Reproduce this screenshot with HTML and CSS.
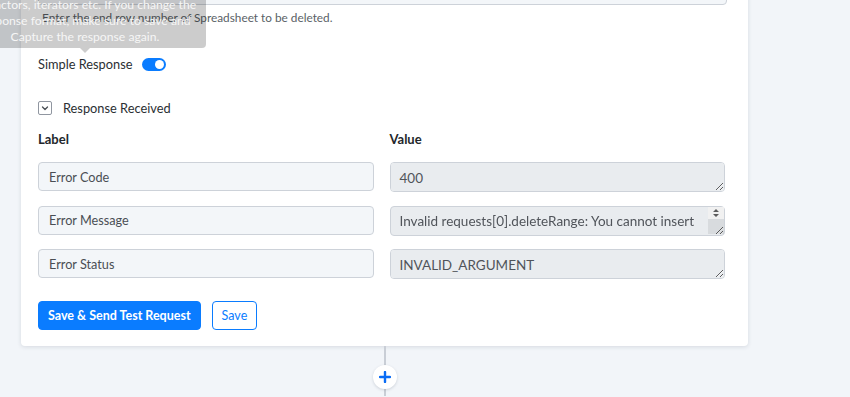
FILE: index.html
```html
<!DOCTYPE html>
<html lang="en">
<head>
    <meta charset="UTF-8">
    <meta name="viewport" content="width=device-width, initial-scale=1.0">
    <title>Delete Rows - Test Request</title>
    <link rel="stylesheet" href="styles.css">
</head>
<body>
    <div class="page">
        <div class="card">
            <div class="field">
                <input class="field-input" type="text" value="">
                <p class="help-text">Enter the end row number of Spreadsheet to be deleted.</p>
            </div>

            <div class="toggle-row">
                <span>Simple Response</span>
                <span class="switch"><span class="switch-knob"></span></span>
            </div>

            <div class="collapse-row">
                <span class="chevron-box">
                    <svg width="10" height="10" viewBox="0 0 10 10">
                        <path d="M2.5 4 L5 6.5 L7.5 4" fill="none" stroke="#4a4f55" stroke-width="1.3" stroke-linecap="round" stroke-linejoin="round"/>
                    </svg>
                </span>
                <span>Response Received</span>
            </div>

            <div class="response-grid">
                <div class="col-head">Label</div>
                <div class="col-head">Value</div>

                <input class="label-input" type="text" value="Error Code" readonly>
                <textarea class="value-input" readonly>400</textarea>

                <input class="label-input" type="text" value="Error Message" readonly>
                <div class="value-wrap">
                    <textarea class="value-input value-scroll" readonly>Invalid requests[0].deleteRange: You cannot insert within a table, at range of 0 and 1000. Please delete fewer rows or ranges.</textarea>
                    <span class="scroll-arrows">
                        <svg width="16" height="12" viewBox="0 0 16 12">
                            <path d="M5 5 L8 2 L11 5 Z M5 7 H11 L8 10 Z" fill="#5c5c5c"/>
                        </svg>
                    </span>
                    <span class="scroll-corner"></span>
                </div>

                <input class="label-input" type="text" value="Error Status" readonly>
                <textarea class="value-input" readonly>INVALID_ARGUMENT</textarea>
            </div>

            <div class="actions">
                <button class="btn btn-primary">Save &amp; Send Test Request</button>
                <button class="btn btn-outline">Save</button>
            </div>
        </div>

        <div class="connector">
            <span class="add-step">
                <svg width="12" height="12" viewBox="0 0 12 12">
                    <path d="M6 1 V11 M1 6 H11" stroke="#0a6cf5" stroke-width="2.4" stroke-linecap="round"/>
                </svg>
            </span>
        </div>

        <div class="tooltip">
            The response below is used to map data in<br>
            extractors, iterators etc. If you change the<br>
            response format, make sure to save and<br>
            Capture the response again.
        </div>
    </div>
</body>
</html>
```

FILE: styles.css
```css
body {
    margin: 0;
    height: 397px;
    overflow: hidden;
    background-color: #f2f5f9;
    color: #2b2f33;
    font-family: 'Lato', 'Open Sans', sans-serif;
    font-size: 13px;
}

.page {
    display: flow-root;
    position: relative;
    width: 727px;
    padding-left: 21px;
}

.card {
    margin-top: -29px;
    padding: 0 23px 16px 17px;
    background: #ffffff;
    border-radius: 0 0 4px 4px;
    box-shadow: 0 1px 4px rgba(40, 55, 80, 0.14);
}

.field-input {
    display: block;
    box-sizing: border-box;
    width: calc(100% + 2px);
    height: 34px;
    margin: 0;
    background: #f3f6f9;
    border: 1px solid #cdd2d9;
    border-radius: 4px;
}

.help-text {
    margin: 6px 0 0 4px;
    font-size: 11.8px;
    line-height: 14px;
    color: #5a5f66;
}

.toggle-row {
    display: flex;
    align-items: center;
    gap: 10px;
    height: 20px;
    margin-top: 29px;
    font-size: 12.8px;
}

.switch {
    display: flex;
    align-items: center;
    justify-content: flex-end;
    box-sizing: border-box;
    width: 24px;
    height: 13px;
    padding: 2px;
    background: #0a7cff;
    border-radius: 7px;
}

.switch-knob {
    width: 9px;
    height: 9px;
    background: #ffffff;
    border-radius: 50%;
}

.collapse-row {
    display: flex;
    align-items: center;
    gap: 11px;
    height: 20px;
    margin-top: 24px;
    font-size: 12.8px;
}

.chevron-box {
    display: flex;
    align-items: center;
    justify-content: center;
    box-sizing: border-box;
    width: 14px;
    height: 14px;
    border: 1px solid #9096a0;
    border-radius: 2px;
}

.response-grid {
    display: grid;
    grid-template-columns: 1fr 1fr;
    column-gap: 16px;
    row-gap: 13.5px;
    margin-top: 13px;
}

.col-head {
    height: 16px;
    line-height: 16px;
    font-weight: 700;
    color: #23272b;
    margin-bottom: 1.5px;
}

.label-input {
    align-self: start;
    box-sizing: border-box;
    width: 100%;
    height: 29px;
    margin: 0;
    padding: 0 10px;
    background: #f3f6f9;
    border: 1px solid #cdd2d9;
    border-radius: 4px;
    font-family: inherit;
    font-size: 12.7px;
    color: #4a4e54;
    outline: none;
}

.value-input {
    display: block;
    box-sizing: border-box;
    width: 100%;
    height: 30px;
    margin: 0;
    padding: 6px 9px;
    background: #e9ecef;
    border: 1px solid #cdd2d9;
    border-radius: 4px;
    font-family: inherit;
    font-size: 13.5px;
    line-height: 18px;
    color: #50545a;
    resize: vertical;
    outline: none;
}

.value-wrap {
    position: relative;
}

.value-scroll {
    overflow: hidden;
    padding-right: 26px;
    line-height: 21px;
    padding-top: 4px;
}

/* the browser hides real scrollbars in screenshots, so draw the short one */
.scroll-arrows {
    position: absolute;
    top: 1px;
    right: 1px;
    display: flex;
    width: 16px;
    height: 12px;
    background: #f1f1f1;
}

.scroll-corner {
    position: absolute;
    top: 13px;
    right: 1px;
    width: 16px;
    height: 15px;
    background: rgba(0, 0, 0, 0.07);
    pointer-events: none;
}

.actions {
    display: flex;
    gap: 11px;
    margin-top: 22px;
}

.btn {
    height: 29px;
    padding: 0 9px;
    border-radius: 4px;
    font-family: inherit;
    font-size: 12.5px;
    font-weight: 700;
    cursor: pointer;
}

.btn-primary {
    background: #0a7cff;
    border: 1px solid #0a7cff;
    color: #ffffff;
}

.btn-outline {
    background: #ffffff;
    border: 1px solid #0a7cff;
    color: #0a7cff;
    font-weight: 400;
}

.connector {
    display: flex;
    justify-content: center;
    height: 50px;
    background: linear-gradient(#c9ced6, #c9ced6) no-repeat center / 2px 100%;
}

.add-step {
    display: flex;
    align-items: center;
    justify-content: center;
    width: 24px;
    height: 24px;
    margin-top: 19px;
    background: #ffffff;
    border-radius: 50%;
    box-shadow: 0 1px 3px rgba(40, 55, 80, 0.18);
}

/* tooltip hanging over the form, mostly cut off at the top */
.tooltip {
    position: absolute;
    top: 48px;
    left: -36px;
    width: 242px;
    box-sizing: border-box;
    padding: 0 6px 3px;
    transform: translateY(-100%);
    background: rgba(0, 0, 0, 0.2);
    border-radius: 4px;
    color: #f6f6f6;
    font-size: 12.2px;
    line-height: 16px;
    text-align: center;
}

.tooltip::after {
    content: "";
    position: absolute;
    top: 100%;
    left: 50%;
    margin-left: -5px;
    border: 5px solid transparent;
    border-top-color: rgba(0, 0, 0, 0.2);
    border-bottom: 0;
}
```
